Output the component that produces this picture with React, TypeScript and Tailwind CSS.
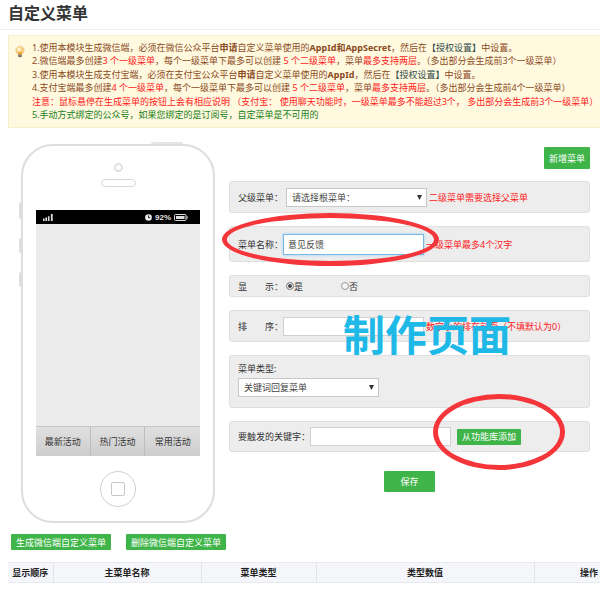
import React from 'react';

const tabs = ['最新活动', '热门活动', '常用活动'];

const greenBtn = 'bg-[#3fb549] text-white rounded-[1px] whitespace-nowrap';
const field = 'border border-[#d0d0d0] bg-white text-[#444] px-[4px] w-[141px]';

const Bulb: React.FC = () => (
    <svg viewBox="0 0 10 13" className="w-[10px] h-[13px]" aria-hidden="true">
        <circle cx="5" cy="4.5" r="4.2" fill="#f8cf7d" stroke="#e3bf8c" strokeWidth="0.6" />
        <circle cx="4" cy="3.2" r="1.9" fill="#fff3cf" />
        <path d="M3 6.5h4L6.5 9h-3z" fill="#e79a2f" />
        <path d="M3.2 8.8h3.6v1.4L6 11.2H4l-.8-1z" fill="#7d776c" />
    </svg>
);

const Notice: React.FC = () => (
    <div className="ml-2 mt-[5px] border border-r-0 border-[#f7efc9] bg-[#fff9e0] pl-[6px] pt-[5px] pb-[6px] flex gap-[7px] overflow-hidden">
        <div className="pt-[5px] shrink-0">
            <Bulb />
        </div>
        <div className="min-h-20 flex flex-col justify-between leading-[13px] whitespace-nowrap text-[#8a4a1c]">
            <p>1.使用本模块生成微信端，必须在微信公众平台<b>申请</b>自定义菜单使用的<b>AppId和AppSecret</b>，然后在<a href="#auth" className="text-[#2f4a4a]">【授权设置】</a>中设置。</p>
            <p>2.微信端最多创建<span className="text-[#ff1a1a]">3 个一级菜单</span>，每个一级菜单下最多可以创建 <span className="text-[#ff1a1a]">5 个二级菜单</span>，菜单<span className="text-[#ff1a1a]">最多支持两层</span>。（多出部分会生成前3个一级菜单）</p>
            <p>3.使用本模块生成支付宝端，必须在支付宝公众平台<b>申请</b>自定义菜单使用的<b>AppId</b>，然后在<a href="#auth" className="text-[#2f4a4a]">【授权设置】</a>中设置。</p>
            <p>4.支付宝端最多创建<span className="text-[#ff1a1a]">4 个一级菜单</span>，每个一级菜单下最多可以创建 <span className="text-[#ff1a1a]">5 个二级菜单</span>，菜单<span className="text-[#ff1a1a]">最多支持两层</span>。（多出部分会生成前4个一级菜单）</p>
            <p className="text-[#ff1a1a]">注意：鼠标悬停在生成菜单的按钮上会有相应说明 （支付宝： 使用聊天功能时，一级菜单最多不能超过3个， 多出部分会生成前3个一级菜单）</p>
            <p className="text-[#188018]">5.手动方式绑定的公众号，如果您绑定的是订阅号，自定菜单是不可用的</p>
        </div>
    </div>
);

const Phone: React.FC = () => (
    <div className="relative shrink-0 w-[194px] rounded-[32px] border-2 border-[#dedede] bg-white px-[13px] flex flex-col items-center">
        <span className="absolute -top-[4px] left-[128px] w-[32px] h-[2px] rounded-t bg-[#e6e6e6]" />
        <span className="absolute top-[56px] -left-[4px] w-[2px] h-[17px] rounded-l bg-[#dedede]" />
        <span className="absolute top-[92px] -left-[4px] w-[2px] h-[15px] rounded-l bg-[#dedede]" />
        <span className="absolute top-[126px] -left-[4px] w-[2px] h-[15px] rounded-l bg-[#dedede]" />
        <div className="mt-[17px] size-[9px] rounded-full border-2 border-[#e0e0e0]" />
        <div className="mt-[7px] w-[35px] h-[8px] rounded-full border border-[#d8d8d8]" />
        <div className="mt-[23px] w-full h-[14px] bg-black flex items-center justify-between pl-[7px] pr-[12px]">
            <svg viewBox="0 0 10 7" className="w-[10px] h-[7px]" fill="#ddd" aria-hidden="true">
                <path d="M0 4.5h1.6V7H0zM2.4 3.5H4V7H2.4zM4.9 2.2h1.6V7H4.9zM7.9 0h1.8v7H7.9z" />
            </svg>
            <span className="flex items-center gap-[3px] text-[#e4e4e4] text-[8px]">
                <svg viewBox="0 0 8 8" className="size-[7px]" aria-hidden="true">
                    <circle cx="4" cy="4" r="3.8" fill="#eee" />
                    <path d="M4 1.6V4.2h2" stroke="#000" fill="none" />
                </svg>
                <span className="font-['Liberation_Sans',sans-serif] font-bold">92%</span>
                <svg viewBox="0 0 14 7" className="w-[14px] h-[7px]" aria-hidden="true">
                    <rect x="0.5" y="0.5" width="11.5" height="6" rx="1" fill="none" stroke="#ddd" />
                    <rect x="2" y="2" width="8.5" height="3" fill="#ddd" />
                    <path d="M12.6 2.2h1v2.6h-1z" fill="#ddd" />
                </svg>
            </span>
        </div>
        <div className="w-full h-[202px] bg-[#ececec]" />
        <div className="w-full h-[30px] grid grid-cols-3 border-t border-[#c8c8c8] bg-linear-to-b from-[#e0e0e0] to-[#cdcdcd] text-[#333]">
            {tabs.map((tab) => (
                <button key={tab} type="button" className="border-r border-[#bdbdbd] last:border-r-0">{tab}</button>
            ))}
        </div>
        <div className="mt-[15px] mb-[14px] size-[36px] rounded-full border border-[#cfcfcf] flex items-center justify-center">
            <div className="size-[14px] rounded-[2px] border border-[#c8c8c8]" />
        </div>
    </div>
);

type SelectProps = { id: string; text: string };

const Select: React.FC<SelectProps> = ({ id, text }) => (
    <div className="relative w-[141px]">
        <select id={id} className="appearance-none block w-full h-[19px] border border-[#c8c8c8] bg-white text-[#444] pl-[5px]">
            <option>{text}</option>
        </select>
        <svg viewBox="0 0 6 6" className="absolute right-[5px] top-[7px] size-[5px] pointer-events-none" aria-hidden="true">
            <path d="M0 0h6L3 6z" fill="#333" />
        </svg>
    </div>
);

type PanelProps = { className: string; children: React.ReactNode };

const Panel: React.FC<PanelProps> = ({ className, children }) => (
    <div className={`relative flex rounded-[3px] border border-[#dfdfdf] bg-[#ededed] px-[8px] text-[#333] whitespace-nowrap ${className}`}>
        {children}
    </div>
);

const MenuForm: React.FC = () => (
    <form className="flex-1 min-w-0 pt-[3px] flex flex-col" onSubmit={(e) => e.preventDefault()}>
        <button type="button" className={`${greenBtn} self-end h-[22px] px-[5px]`}>新增菜单</button>
        <div className="mt-[12px] flex flex-col gap-[13px]">
            <Panel className="h-[32px] items-center">
                <label htmlFor="parent" className="mr-[3px]">父级菜单：</label>
                <Select id="parent" text="请选择根菜单：" />
                <span className="ml-[2px] text-[#ff1a1a]">二级菜单需要选择父菜单</span>
            </Panel>
            <Panel className="h-[36px] items-center">
                <label htmlFor="name">菜单名称：</label>
                <input id="name" type="text" defaultValue="意见反馈" className="border border-[#78b6e6] bg-white text-[#444] px-[4px] w-[141px] h-[21px] shadow-[0_0_3px_#9fd0f5]" />
                <span className="ml-[2px] text-[#ff1a1a]">一级菜单最多4个汉字</span>
                <span className="absolute -left-[8px] -top-[14px] w-[217px] h-[53px] rounded-[50%] border-[5px] border-[#f4363a] pointer-events-none" />
            </Panel>
            <Panel className="h-[22px] items-center">
                <span className="mr-[3px]">显&emsp;&emsp;示：</span>
                <label className="flex items-center w-[55px]">
                    <input type="radio" name="show" defaultChecked className="appearance-none size-[8px] rounded-full border border-[#999] bg-white checked:bg-[#444] checked:shadow-[inset_0_0_0_1px_#fff]" />
                    是
                </label>
                <label className="flex items-center">
                    <input type="radio" name="show" className="appearance-none size-[8px] rounded-full border border-[#999] bg-[#f4f4f4] checked:bg-[#444] checked:shadow-[inset_0_0_0_1px_#fff]" />
                    否
                </label>
            </Panel>
            <Panel className="h-[32px] items-center">
                <label htmlFor="sort">排&emsp;&emsp;序：</label>
                <input id="sort" type="text" className={`${field} h-[19px]`} />
                <span className="ml-[2px] text-[#ff1a1a]">数字小的排在前面（不填默认为0）</span>
                <span className="absolute left-[113px] top-[3px] text-[42px] leading-[42px] font-bold text-[#1fb9e8] pointer-events-none">制作页面</span>
            </Panel>
            <Panel className="h-[53px] flex-col justify-center gap-[3px] pb-[4px]">
                <label htmlFor="type" className="leading-[13px]">菜单类型:</label>
                <Select id="type" text="关键词回复菜单" />
            </Panel>
            <Panel className="h-[31px] items-center">
                <label htmlFor="keyword">要触发的关键字：</label>
                <input id="keyword" type="text" className={`${field} h-[19px]`} />
                <button type="button" className={`${greenBtn} ml-[6px] h-[16px] px-[5px]`}>从功能库添加</button>
                <span className="absolute left-[203px] -top-[28px] w-[132px] h-[76px] rounded-[50%] border-[5px] border-[#f4363a] pointer-events-none" />
            </Panel>
        </div>
        <button type="submit" className={`${greenBtn} self-center mt-[19px] w-[51px] h-[21px]`}>保存</button>
    </form>
);

const th = 'border-r border-[#e2e3ea] font-bold';

export default function App() {
    return (
        <div className="min-h-screen bg-white overflow-hidden text-[9px] leading-[13px] font-['Noto_Sans','Noto_Sans_CJK_SC',sans-serif]">
            <h1 className="h-[30px] pl-2 pb-[3px] flex items-center border-b border-[#eee] text-[16px] font-bold text-[#333]">自定义菜单</h1>
            <Notice />
            <div className="mt-[16px] pl-[21px] pr-[10px] flex items-start gap-[14px]">
                <Phone />
                <MenuForm />
            </div>
            <div className="mt-[11px] pl-[11px] flex gap-[15px]">
                <button type="button" className={`${greenBtn} h-[16px] px-[5px]`}>生成微信端自定义菜单</button>
                <button type="button" className={`${greenBtn} h-[16px] px-[5px]`}>删除微信端自定义菜单</button>
            </div>
            <div className="mt-[12px] pl-2">
                <table className="w-full table-fixed border-collapse bg-[#f5f6fa] text-[#222]">
                    <thead>
                        <tr className="h-[20px] border-y border-[#e9eaf0]">
                            <th className={`${th} w-[45px]`}>显示顺序</th>
                            <th className={`${th} w-[25%]`}>主菜单名称</th>
                            <th className={`${th} w-[115px]`}>菜单类型</th>
                            <th className={th}>类型数值</th>
                            <th className="w-[66px] pr-[2px] text-right font-bold">操作</th>
                        </tr>
                    </thead>
                </table>
            </div>
        </div>
    );
}
